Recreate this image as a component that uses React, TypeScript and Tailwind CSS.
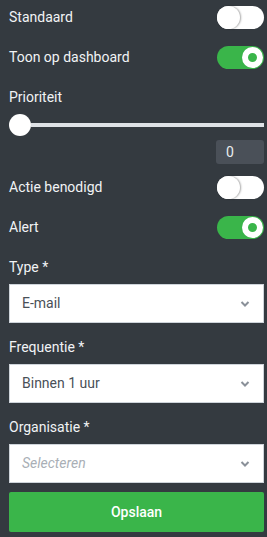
function Toggle({ on }: { on: boolean }) {
  return on ? (
    <div className="flex h-[23px] w-[47px] items-center justify-end rounded-full bg-[#3ab54a] p-px">
      <div className="h-[21px] w-[21px] rounded-full border-[6px] border-white bg-[#3ab54a]" />
    </div>
  ) : (
    <div className="flex h-[23px] w-[47px] items-center rounded-full bg-white">
      <div className="h-[23px] w-[23px] rounded-full bg-white shadow-[1px_0_2px_rgba(0,0,0,0.35)]" />
    </div>
  )
}

function Chevron() {
  return (
    <svg width="10" height="6" viewBox="0 0 10 6" className="text-[#8a9099]">
      <path d="M1.5 1 L5 4.5 L8.5 1" fill="none" stroke="currentColor" strokeWidth="2" />
    </svg>
  )
}

function Select({ value, placeholder }: { value?: string; placeholder?: string }) {
  return (
    <div className="mt-[7px] flex h-[39px] items-center justify-between border border-[#ced4da] bg-white pl-[12px] pr-[13px]">
      {value ? (
        <span className="text-[14px] text-[#495057]">{value}</span>
      ) : (
        <span className="text-[14px] italic text-[#a9afb6]">{placeholder}</span>
      )}
      <Chevron />
    </div>
  )
}

export default function App() {
  return (
    <div
      className="min-h-screen bg-[#343a40] pb-[5px] pl-[9px] pr-[3px] pt-[6px] text-[14px] text-[#f1f3f5]"
      style={{ fontFamily: 'Roboto, "Liberation Sans", sans-serif' }}
    >
      <div className="flex h-[23px] items-center justify-between">
        <span>Standaard</span>
        <Toggle on={false} />
      </div>
      <div className="mt-[17px] flex h-[23px] items-center justify-between">
        <span>Toon op dashboard</span>
        <Toggle on={true} />
      </div>

      <div className="mt-[18px] leading-5">Prioriteit</div>
      <div className="mt-[7px] flex h-[22px] items-center">
        <div className="h-[22px] w-[22px] shrink-0 rounded-full bg-white" />
        <div className="h-[4px] flex-1 bg-[#dee2e6]" />
      </div>
      <div className="mt-[4px] flex justify-end">
        <div className="flex h-[24px] w-[48px] items-center rounded-[3px] bg-[#4a5058] pl-[10px] text-[#e9ecef]">0</div>
      </div>

      <div className="mt-[12px] flex h-[23px] items-center justify-between">
        <span>Actie benodigd</span>
        <Toggle on={false} />
      </div>
      <div className="mt-[17px] flex h-[23px] items-center justify-between">
        <span>Alert</span>
        <Toggle on={true} />
      </div>

      <div className="mt-[18px] leading-5">Type *</div>
      <Select value="E-mail" />

      <div className="mt-[14px] leading-5">Frequentie *</div>
      <Select value="Binnen 1 uur" />

      <div className="mt-[14px] leading-5">Organisatie *</div>
      <Select placeholder="Selecteren" />

      <button className="mt-[9px] flex h-[40px] w-full items-center justify-center rounded-[2px] bg-[#3ab54a] font-medium text-white">
        Opslaan
      </button>
    </div>
  )
}
